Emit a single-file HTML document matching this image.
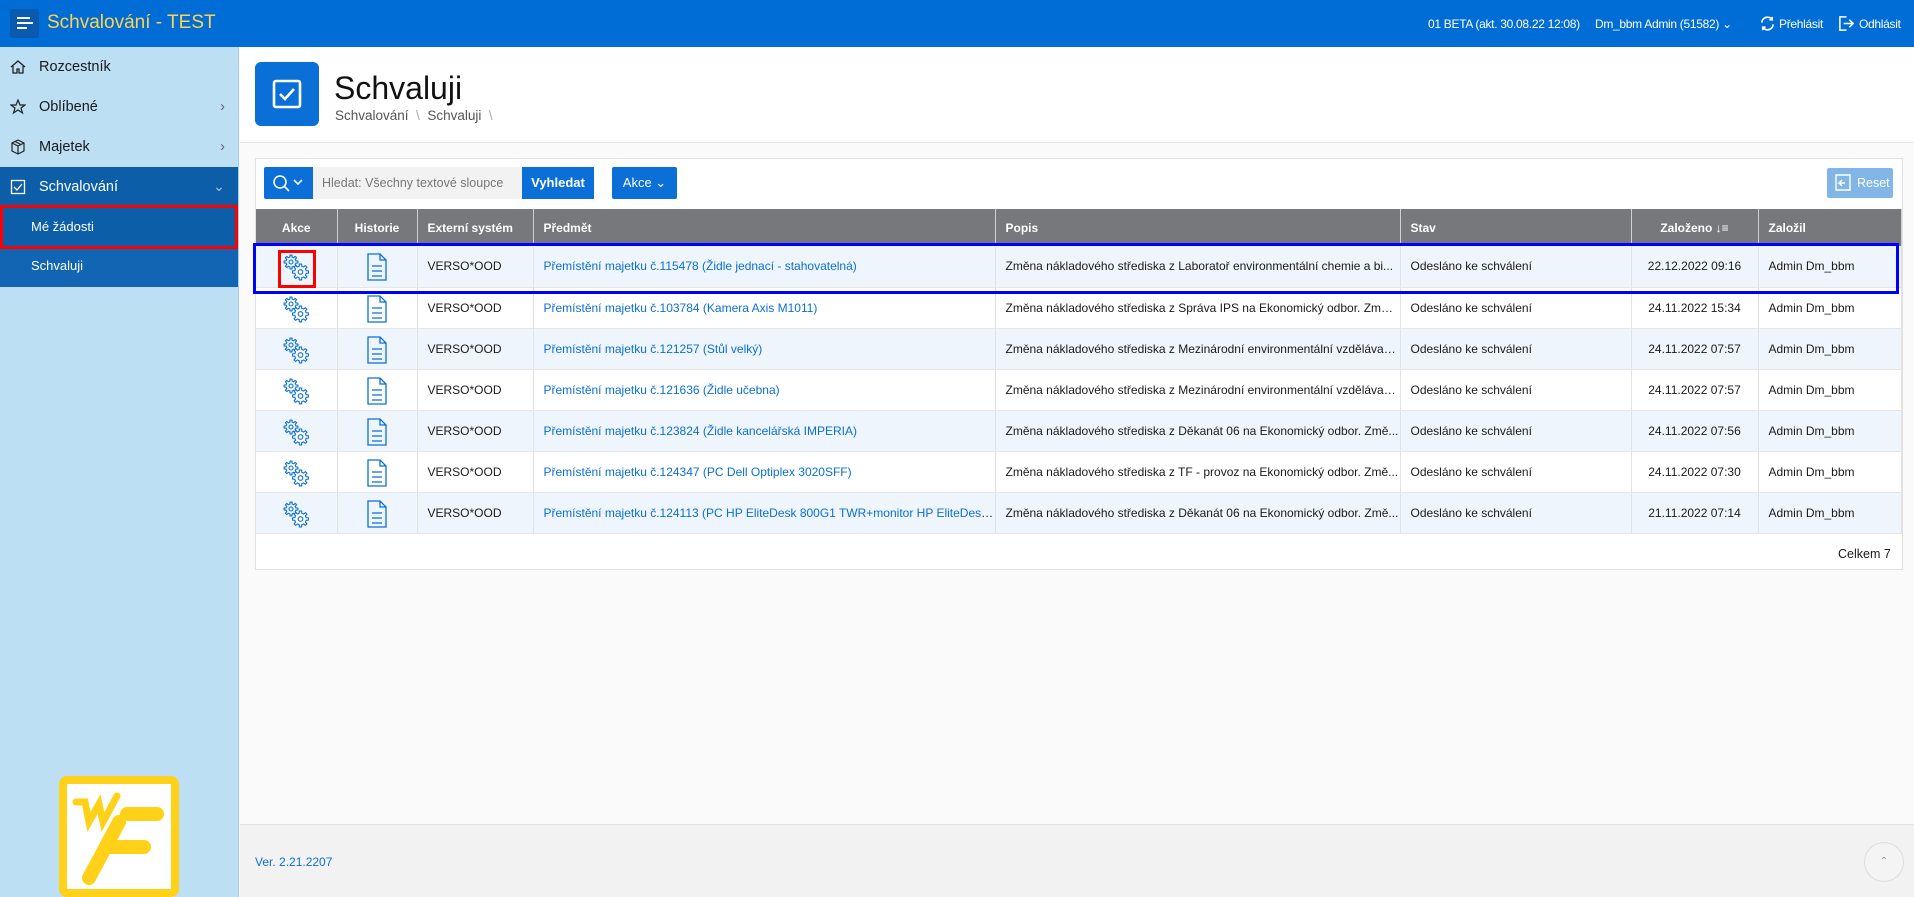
<!DOCTYPE html>
<html><head><meta charset="utf-8"><style>
*{box-sizing:border-box;margin:0;padding:0}
body{width:1914px;height:897px;overflow:hidden;background:#fafafa;font-family:"Liberation Sans",sans-serif;position:relative;color:#1a1a1a}
.abs{position:absolute}
#top{left:0;top:0;width:1914px;height:47px;background:#006dd7}
#side{left:0;top:47px;width:239px;height:850px;background:#bcdff4;border-right:1px solid #a8cfe8}
.nav{position:absolute;left:0;width:239px;height:40px;font-size:14.5px;color:#1a1a1a;display:flex;align-items:center}
.nav svg{position:absolute;left:10px}
.nav span{position:absolute;left:39px}
.chev{position:absolute;right:14px}
table{border-collapse:collapse;table-layout:fixed;font-size:12px}
th{background:#77787b;color:#fff;font-weight:bold;height:37px;border-right:1px solid #d0d0d0;text-align:left;padding-left:10px}
td{height:41px;border-right:1px solid #e2e2e2;border-bottom:1px solid #e6e6e6;padding-left:10px;white-space:nowrap;overflow:hidden;text-overflow:ellipsis}
tr.o td{background:#eef5fc}
tr.e td{background:#fff}
td.c,th.c{text-align:center;padding-left:0}
a{color:#0a6fd6;text-decoration:none}
.tr{font-size:12px;letter-spacing:-0.3px;color:#fff;white-space:nowrap;top:17px}
</style></head><body>
<div id="top" class="abs">
 <div class="abs" style="left:10px;top:9px;width:29px;height:29px;background:#0a5bb0;border-radius:2px"></div>
 <div class="abs" style="left:17px;top:17px;width:13px;height:2px;background:#fff"></div>
 <div class="abs" style="left:17px;top:22px;width:16px;height:2px;background:#fff"></div>
 <div class="abs" style="left:17px;top:27px;width:10px;height:2px;background:#fff"></div>
 <div class="abs" style="left:47px;top:12px;font-size:19px;color:#ffd34d">Schvalování - TEST</div>
 <div class="abs tr" style="left:1428px">01 BETA (akt. 30.08.22 12:08)</div>
 <div class="abs tr" style="left:1595px">Dm_bbm Admin (51582) &#8964;</div>
 <svg class="abs" style="left:1759px;top:15px" width="17" height="17" viewBox="0 0 18 18" fill="none" stroke="#fff" stroke-width="1.8"><path d="M14 5A6 6 0 0 0 3 8M4 13A6 6 0 0 0 15 10M14 2v3h-3M4 16v-3h3"/></svg>
 <div class="abs tr" style="left:1779px">Přehlásit</div>
 <svg class="abs" style="left:1838px;top:15px" width="17" height="17" viewBox="0 0 18 18" fill="none" stroke="#fff" stroke-width="1.6"><path d="M9 2H2v14h7M6 9h10M12 5l4 4-4 4"/></svg>
 <div class="abs tr" style="left:1859px">Odhlásit</div>
</div>
<div id="side" class="abs">
 <div class="nav" style="top:0"><svg width="16" height="16" viewBox="0 0 16 16" fill="none" stroke="#222" stroke-width="1.3"><path d="M1 8L8 2l7 6M3 7v7h4v-4h2v4h4V7"/></svg><span>Rozcestník</span></div>
 <div class="nav" style="top:40px"><svg width="16" height="16" viewBox="0 0 16 16" fill="none" stroke="#222" stroke-width="1.2"><path d="M8 1l2 5h5l-4 3 1.5 5L8 11l-4.5 3L5 9 1 6h5z"/></svg><span>Oblíbené</span><span class="chev" style="left:auto;color:#667">&#8250;</span></div>
 <div class="nav" style="top:80px"><svg width="16" height="16" viewBox="0 0 16 16" fill="none" stroke="#222" stroke-width="1.2"><path d="M8 1l6 3v8l-6 3-6-3V4zM2 4l6 3 6-3M8 7v8M5 2.5l6 3"/></svg><span>Majetek</span><span class="chev" style="left:auto;color:#667">&#8250;</span></div>
 <div class="abs" style="left:0;top:120px;width:238px;height:120px;background:#0d5ea9"></div>
 <div class="nav" style="top:120px;color:#fff"><svg width="16" height="16" viewBox="0 0 16 16" fill="none" stroke="#fff" stroke-width="1.3"><rect x="1.5" y="1.5" width="13" height="13"/><path d="M4 8l3 3 5-6"/></svg><span>Schvalování</span><span class="chev" style="left:auto;color:#9bc">&#8964;</span></div>
 <div class="abs" style="left:0;top:158px;width:238px;height:44px;border:3px solid #f00;background:#0d5ea9"></div>
 <div class="abs" style="left:31px;top:172px;font-size:13px;color:#fff">Mé žádosti</div>
 <div class="abs" style="left:0;top:202px;width:238px;height:38px;background:#1265b3"></div>
 <div class="abs" style="left:31px;top:211px;font-size:13px;color:#fff">Schvaluji</div>
 <div class="abs" style="left:59px;top:729px;width:120px;height:121px;border:8px solid #ffd119;border-radius:8px;background:#fff"></div>
 <svg class="abs" style="left:67px;top:737px" width="104" height="105" viewBox="0 0 104 105" fill="none" stroke="#ffd119" stroke-linecap="round"><path d="M9 18h9l4 20 10-18 4 18 14-26" stroke-width="7"/><path d="M60 30h30M22 94L52 38M40 63h37" stroke-width="14"/></svg>
</div>
<div class="abs" style="left:240px;top:47px;width:1674px;height:96px;background:#fff;border-bottom:1px solid #e6e6e6"></div>
<div class="abs" style="left:255px;top:62px;width:64px;height:64px;background:#0a6fd6;border-radius:6px"></div>
<svg class="abs" style="left:272px;top:79px" width="30" height="30" viewBox="0 0 30 30" fill="none" stroke="#fff" stroke-width="2.6"><rect x="2" y="2" width="26" height="26" rx="2"/><path d="M8 15l5 5 9-10"/></svg>
<div class="abs" style="left:334px;top:70px;font-size:32px;color:#111">Schvaluji</div>
<div class="abs" style="left:335px;top:108px;font-size:13.5px;color:#555;white-space:nowrap">Schvalování <span style="color:#aaa">&nbsp;\&nbsp;</span> Schvaluji <span style="color:#aaa">&nbsp;\</span></div>
<div class="abs" style="left:255px;top:158px;width:1648px;height:412px;background:#fff;border:1px solid #e2e2e2"></div>
<div class="abs" style="left:264px;top:167px;width:49px;height:32px;background:#0a6fd6;border-radius:2px 0 0 2px"></div>
<svg class="abs" style="left:272px;top:174px" width="34" height="18" viewBox="0 0 34 18" fill="none" stroke="#fff" stroke-width="1.6"><circle cx="8" cy="8" r="6"/><path d="M12.5 12.5L17 17M22 6l4 4 4-4"/></svg>
<div class="abs" style="left:313px;top:167px;width:209px;height:32px;background:#f2f2f2;font-size:12.5px;color:#777;padding:9px 0 0 9px;white-space:nowrap">Hledat: Všechny textové sloupce</div>
<div class="abs" style="left:522px;top:167px;width:72px;height:32px;background:#0a6fd6;color:#fff;font-size:13px;font-weight:bold;text-align:center;padding-top:8px">Vyhledat</div>
<div class="abs" style="left:612px;top:167px;width:65px;height:32px;background:#0a6fd6;color:#fff;font-size:13px;text-align:center;padding-top:8px;border-radius:2px">Akce &#8964;</div>
<div class="abs" style="left:1827px;top:168px;width:66px;height:30px;background:#82b6e6;color:#fff;font-size:12.5px;padding:8px 0 0 30px;border-radius:2px">Reset</div>
<svg class="abs" style="left:1834px;top:174px" width="17" height="17" viewBox="0 0 17 17" fill="none" stroke="#fff" stroke-width="1.4"><path d="M2 1h14v15H2zM11 9H5l3-3M5 9l3 3"/></svg>
<table class="abs" style="left:256px;top:209px;width:1645px">
<colgroup><col style="width:81px"><col style="width:80px"><col style="width:116px"><col style="width:462px"><col style="width:405px"><col style="width:231px"><col style="width:127px"><col style="width:143px"></colgroup>
<tr><th class="c">Akce</th><th class="c">Historie</th><th>Externí systém</th><th>Předmět</th><th>Popis</th><th>Stav</th><th class="c">Založeno <span style="font-weight:normal">&#8595;&#8801;</span></th><th>Založil</th></tr>
<tr class="o"><td class="c">G</td><td class="c">D</td><td>VERSO*OOD</td><td><a>Přemístění majetku č.115478 (Židle jednací - stahovatelná)</a></td><td>Změna nákladového střediska z Laboratoř environmentální chemie a bi...</td><td>Odesláno ke schválení</td><td class="c">22.12.2022 09:16</td><td>Admin Dm_bbm</td></tr>
<tr class="e"><td class="c">G</td><td class="c">D</td><td>VERSO*OOD</td><td><a>Přemístění majetku č.103784 (Kamera Axis M1011)</a></td><td>Změna nákladového střediska z Správa IPS na Ekonomický odbor. Změn...</td><td>Odesláno ke schválení</td><td class="c">24.11.2022 15:34</td><td>Admin Dm_bbm</td></tr>
<tr class="o"><td class="c">G</td><td class="c">D</td><td>VERSO*OOD</td><td><a>Přemístění majetku č.121257 (Stůl velký)</a></td><td>Změna nákladového střediska z Mezinárodní environmentální vzdělávac...</td><td>Odesláno ke schválení</td><td class="c">24.11.2022 07:57</td><td>Admin Dm_bbm</td></tr>
<tr class="e"><td class="c">G</td><td class="c">D</td><td>VERSO*OOD</td><td><a>Přemístění majetku č.121636 (Židle učebna)</a></td><td>Změna nákladového střediska z Mezinárodní environmentální vzdělávac...</td><td>Odesláno ke schválení</td><td class="c">24.11.2022 07:57</td><td>Admin Dm_bbm</td></tr>
<tr class="o"><td class="c">G</td><td class="c">D</td><td>VERSO*OOD</td><td><a>Přemístění majetku č.123824 (Židle kancelářská IMPERIA)</a></td><td>Změna nákladového střediska z Děkanát 06 na Ekonomický odbor. Změ...</td><td>Odesláno ke schválení</td><td class="c">24.11.2022 07:56</td><td>Admin Dm_bbm</td></tr>
<tr class="e"><td class="c">G</td><td class="c">D</td><td>VERSO*OOD</td><td><a>Přemístění majetku č.124347 (PC Dell Optiplex 3020SFF)</a></td><td>Změna nákladového střediska z TF - provoz na Ekonomický odbor. Změ...</td><td>Odesláno ke schválení</td><td class="c">24.11.2022 07:30</td><td>Admin Dm_bbm</td></tr>
<tr class="o"><td class="c">G</td><td class="c">D</td><td>VERSO*OOD</td><td><a>Přemístění majetku č.124113 (PC HP EliteDesk 800G1 TWR+monitor HP EliteDesk L...</a></td><td>Změna nákladového střediska z Děkanát 06 na Ekonomický odbor. Změ...</td><td>Odesláno ke schválení</td><td class="c">21.11.2022 07:14</td><td>Admin Dm_bbm</td></tr>
</table>
<div class="abs" style="left:1838px;top:547px;font-size:12.5px">Celkem 7</div>
<div class="abs" style="left:253px;top:243px;width:1646px;height:51px;border:3px solid #0000ff"></div>
<div class="abs" style="left:278px;top:250px;width:38px;height:38px;border:3px solid #f00"></div>
<div class="abs" style="left:240px;top:824px;width:1674px;height:73px;background:#f2f2f2;border-top:1px solid #e2e2e2"></div>
<div class="abs" style="left:255px;top:855px;font-size:12px;color:#0a6fd6">Ver. 2.21.2207</div>
<div class="abs" style="left:1864px;top:842px;width:40px;height:40px;border-radius:50%;border:1px solid #ddd;background:#f4f4f4;text-align:center;color:#999;font-size:14px;padding-top:11px">&#710;</div>
<script>
function gear(cx,cy,ro,ri,n){var p='',s=Math.PI*2/n;for(var i=0;i<n;i++){var a=i*s;var pts=[[ri,a-s*0.5],[ri,a-s*0.28],[ro,a-s*0.18],[ro,a+s*0.18],[ri,a+s*0.28]];pts.forEach(function(q,j){p+=(i==0&&j==0?'M':'L')+(cx+q[0]*Math.cos(q[1])).toFixed(2)+' '+(cy+q[0]*Math.sin(q[1])).toFixed(2)});}return p+'Z';}
var g='<svg width="30" height="30" viewBox="0 0 30 30" fill="none" stroke="#0a6fd6" stroke-width="1.1" stroke-linejoin="round"><path d="'+gear(10,10,7,5,8)+'"/><circle cx="10" cy="10" r="2"/><path fill="#fff" d="'+gear(19.5,20,8,5.8,8)+'"/><circle cx="19.5" cy="20" r="2.3"/></svg>';
var d='<svg width="20" height="28" viewBox="0 0 20 28" fill="none" stroke="#0a6fd6" stroke-width="1.3"><path d="M1 1h12l6 6v20H1zM13 1v6h6M5 13h10M5 18h10M5 23h10"/></svg>';
document.querySelectorAll('td.c').forEach(function(t){if(t.textContent=='G'){t.innerHTML=g;t.style.paddingTop='5px'}else if(t.textContent=='D'){t.innerHTML=d;t.style.paddingTop='5px'}});
</script>
</body></html>
